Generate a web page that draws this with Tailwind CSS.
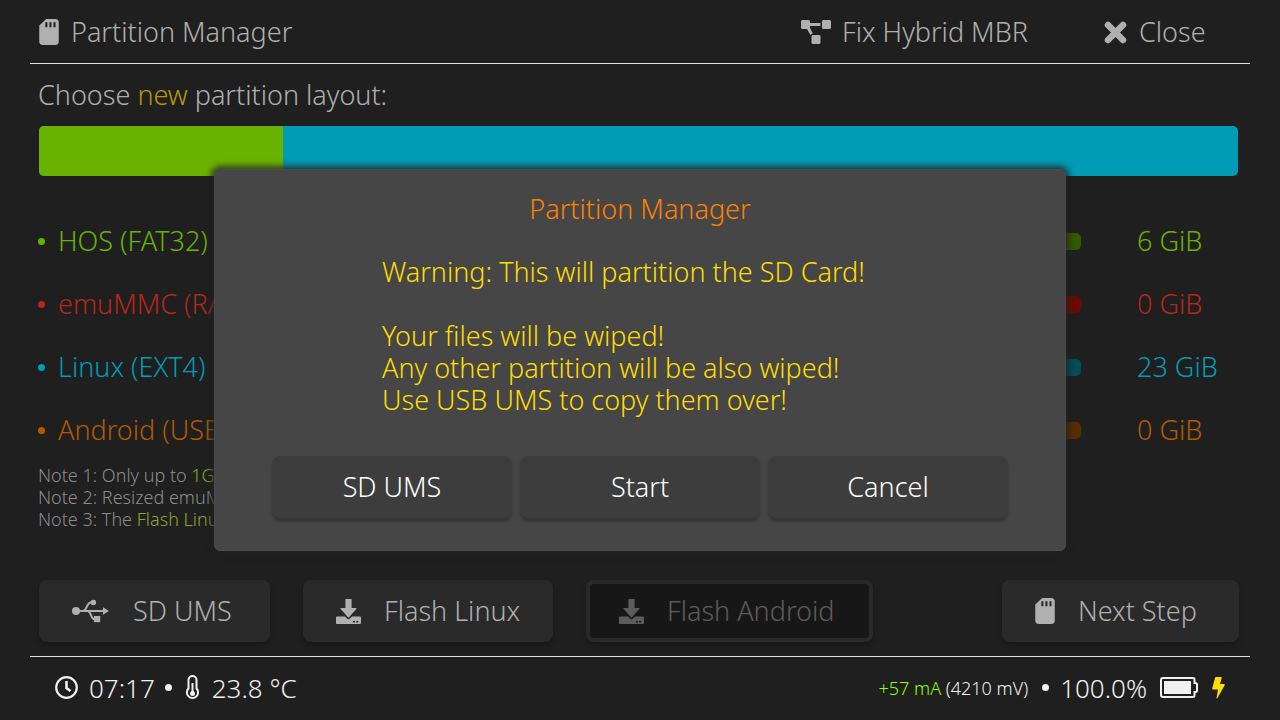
<!DOCTYPE html>
<html lang="en">
<head>
<meta charset="utf-8">
<title>Partition Manager</title>
<script src="https://cdn.jsdelivr.net/npm/@tailwindcss/browser@4"></script>
</head>
<body class="relative flex min-h-screen flex-col overflow-x-hidden bg-[#1f1f1f] font-['Noto_Sans','Open_Sans',sans-serif] text-[27px] leading-8 font-[350] text-[#b0b0b0]">
<svg class="hidden" aria-hidden="true">
  <symbol id="sd" viewBox="0 0 384 512"><path d="M320 0H136L0 128v320c0 35 29 64 64 64h256c35 0 64-29 64-64V64c0-35-29-64-64-64zM160 160h-40V64h40zm80 0h-40V64h40zm80 0h-40V64h40z"/></symbol>
  <symbol id="flash" viewBox="0 0 25 25"><path d="M9.500 0h5.500q.6 0 .6.600v8.400h4.200q1.500 0 .5 1.100l-7 8q-.8.800-1.600 0l-7-8q-1-1.100.5-1.100h4.200V.6q0-.6.6-.6z"/><path fill-rule="evenodd" d="M1 17.500h8l2 2q1.500 1.300 3 0l2-2h8q1 0 1 1v5.500q0 1-1 1H1q-1 0-1-1v-5.500q0-1 1-1zM17 22h2v1.500h-2zm3.200 0h2v1.500h-2z"/></symbol>
</svg>

<header class="mx-[30px] flex h-16 items-center border-b border-[#e0e0e0] pt-px pr-[41px] pl-[9px]">
  <h1 class="flex items-center gap-3"><svg class="h-[26px] w-[20px]" fill="currentColor"><use href="#sd"/></svg>Partition Manager</h1>
  <nav class="ml-auto flex gap-[66px]">
    <button class="flex w-[237px] items-center gap-[11px]"><svg class="h-[24px] w-[30px]" viewBox="0 0 640 512" fill="currentColor"><path d="M384 320H256c-18 0-32 14-32 32v128c0 18 14 32 32 32h128c18 0 32-14 32-32V352c0-18-14-32-32-32zM192 32c0-18-14-32-32-32H32C14 0 0 14 0 32v128c0 18 14 32 32 32h96l73 128c11-19 31-32 55-32L192 176v-48h224V64H192zM608 0H480c-18 0-32 14-32 32v128c0 18 14 32 32 32h128c18 0 32-14 32-32V32c0-18-14-32-32-32z"/></svg>Fix Hybrid MBR</button>
    <button class="flex w-[105px] items-center gap-3"><svg class="size-[23px]" viewBox="0 0 23 23" fill="none" stroke="currentColor" stroke-width="6.500" stroke-linecap="round"><path d="M4 4l15 15M19 4L4 19"/></svg>Close</button>
  </nav>
</header>

<main class="flex flex-1 flex-col px-[38px]">
  <p class="mt-[15px]">Choose <span class="text-[#b39b00]">new</span> partition layout:</p>
  <div class="mt-[15px] mr-1 ml-px flex h-[50px] overflow-hidden rounded-[5px] bg-[#009bb5]"><div class="bg-[#69b300]" style="width:20.35%"></div></div>

  <div class="mt-[49px] flex flex-col gap-[31px]">
    <div class="flex items-center text-[#69b300]"><label for="hos" class="flex w-[400px] items-center gap-[13px]"><i class="size-[7px] rounded-full bg-current"></i>HOS (FAT32)</label><input id="hos" type="range" value="20" class="h-[17px] flex-1 appearance-none rounded-[5px] bg-[#325a00] [&::-webkit-slider-thumb]:size-8 [&::-webkit-slider-thumb]:appearance-none"><output for="hos" class="ml-14 w-[105px]">6 GiB</output></div>
    <div class="flex items-center text-[#b3281c]"><label for="emu" class="flex w-[400px] items-center gap-[13px]"><i class="size-[7px] rounded-full bg-current"></i>emuMMC (RAW)</label><input id="emu" type="range" value="0" class="h-[17px] flex-1 appearance-none rounded-[5px] bg-[#6b0a00] [&::-webkit-slider-thumb]:size-8 [&::-webkit-slider-thumb]:appearance-none"><output for="emu" class="ml-14 w-[105px]">0 GiB</output></div>
    <div class="flex items-center text-[#009bb5]"><label for="lin" class="flex w-[400px] items-center gap-[13px]"><i class="size-[7px] rounded-full bg-current"></i>Linux (EXT4)</label><input id="lin" type="range" value="79" class="h-[17px] flex-1 appearance-none rounded-[5px] bg-[#004d5a] [&::-webkit-slider-thumb]:size-8 [&::-webkit-slider-thumb]:appearance-none"><output for="lin" class="ml-14 w-[105px]">23 GiB</output></div>
    <div class="flex items-center text-[#b35a00]"><label for="and" class="flex w-[400px] items-center gap-[13px]"><i class="size-[7px] rounded-full bg-current"></i>Android (USER)</label><input id="and" type="range" value="0" class="h-[17px] flex-1 appearance-none rounded-[5px] bg-[#5a2d00] [&::-webkit-slider-thumb]:size-8 [&::-webkit-slider-thumb]:appearance-none"><output for="and" class="ml-14 w-[105px]">0 GiB</output></div>
  </div>

  <div class="mt-[18px] text-[18px] leading-[22px] text-[#8c8c8c]">
    <p>Note 1: Only up to <span class="text-[#8fa52f]">1GB</span></p>
    <p>Note 2: Resized emuMMC</p>
    <p>Note 3: The <span class="text-[#8fa52f]">Flash Linux</span></p>
  </div>

  <div class="mt-auto mr-[3px] mb-[14px] ml-px flex gap-[33px]">
    <button class="flex h-[62px] w-[231px] items-center rounded-lg bg-[#2a2a2a] pl-[33px] shadow-[0_4px_4px_#191919]"><svg class="mr-6 h-[24px] w-[37px]" viewBox="0 0 37 24" fill="currentColor"><circle cx="4" cy="12" r="4"/><path d="M31 8.200l6 3.800-6 3.800z"/><circle cx="21.300" cy="3.500" r="2.800"/><path d="M22 17h6.200v6.200H22z"/><path d="M4 12h28M11 12c4 0 3.500-8.500 8-8.500h2M15.500 12c4 0 3 8.500 7.500 8.500h2" fill="none" stroke="currentColor" stroke-width="2"/></svg>SD UMS</button>
    <button class="flex h-[62px] w-[250px] items-center rounded-lg bg-[#2a2a2a] pl-[33px] shadow-[0_4px_4px_#191919]"><svg class="mr-[23px] size-[25px]" fill="currentColor"><use href="#flash"/></svg>Flash Linux</button>
    <button disabled class="flex h-[62px] w-[287px] items-center rounded-lg border-4 border-[#2a2a2a] bg-[#171717] pl-[29px] text-[#5c5c5c] shadow-[0_4px_4px_#191919]"><svg class="mr-[23px] size-[25px]" fill="currentColor"><use href="#flash"/></svg>Flash Android</button>
    <button class="ml-auto flex h-[62px] w-[237px] items-center rounded-lg bg-[#2a2a2a] pl-[33px] shadow-[0_4px_4px_#191919]"><svg class="mr-[23px] h-[26px] w-[20px]" fill="currentColor"><use href="#sd"/></svg>Next Step</button>
  </div>
</main>

<footer class="mx-[30px] flex h-16 items-center justify-between border-t border-[#e0e0e0] px-[25px] pb-[2px] text-[26px] text-[#f0f0f0]">
  <div class="flex items-center">
    <svg class="mr-[11px] size-[23px]" viewBox="0 0 23 23" fill="none" stroke="currentColor" stroke-width="2.200"><circle cx="11.500" cy="11.500" r="10.300"/><path d="M11.500 5v7l4 3" stroke-width="2.600"/></svg>
    <span>07:17</span><i class="mr-[14px] ml-[10px] size-[7px] rounded-full bg-current"></i>
    <svg class="mr-[13px] h-[25px] w-[13px]" viewBox="0 0 13 25" fill="none" stroke="currentColor" stroke-width="2"><path d="M2.500 13.500V5a4 4 0 0 1 8 0v8.500a5.600 5.600 0 1 1-8 0z"/><path d="M6.500 8v10"/><circle cx="6.500" cy="18.500" r="2.500" fill="currentColor" stroke="none"/></svg>
    <span>23.8 °C</span>
  </div>
  <div class="flex items-center">
    <span class="text-[18px]"><span class="text-[#8cff00]">+57 mA</span> (4210 mV)</span><i class="mr-[11px] ml-[14px] size-[7px] rounded-full bg-current"></i><span>100.0%</span>
    <svg class="ml-[13px] h-[21px] w-[38px]" viewBox="0 0 38 21" fill="none" stroke="currentColor" stroke-width="2"><path d="M3 1h30q1.500 0 1.500 1.500V6h1q1.500 0 1.500 1.500v6q0 1.500-1.500 1.500h-1v3.500q0 1.500-1.500 1.500H3q-2 0-2-2V3q0-2 2-2z"/><path d="M4 4h27v13H4z" fill="currentColor" stroke="none"/></svg>
    <svg class="ml-[14px] h-[22px] w-[13px]" viewBox="0 0 13 22" fill="#ffdd00"><path d="M4 0h5q1 0 .7 1L8 7h4q1 0 .8 1L5.500 21q-.6 1-1 0L6 12.500H1Q0 12.500.2 11.500L3 1q.2-1 1-1z"/></svg>
  </div>
</footer>

<div class="absolute inset-0 flex items-start justify-center pt-[169px]">
  <section role="dialog" aria-labelledby="dlg" class="rounded-md border border-[#4b4b4b] bg-[#464646] px-[57px] pt-[23px] pb-8 text-[#ffdd00] shadow-[0_0_6px_3px_#222222cc]">
    <h2 id="dlg" class="text-center text-[#ff8000]">Partition Manager</h2>
    <div class="mx-auto mt-[31px] w-[516px]">
      <p>Warning: This will partition the SD Card!</p>
      <p class="mt-8">Your files will be wiped!</p>
      <p>Any other partition will be also wiped!</p>
      <p>Use USB UMS to copy them over!</p>
    </div>
    <div class="mt-10 flex gap-2 text-white">
      <button class="h-[62px] w-60 rounded-lg bg-[#3d3d3d] shadow-[0_4px_3px_#363636]">SD UMS</button>
      <button class="h-[62px] w-60 rounded-lg bg-[#3d3d3d] shadow-[0_4px_3px_#363636]">Start</button>
      <button class="h-[62px] w-60 rounded-lg bg-[#3d3d3d] shadow-[0_4px_3px_#363636]">Cancel</button>
    </div>
  </section>
</div>
</body>
</html>
